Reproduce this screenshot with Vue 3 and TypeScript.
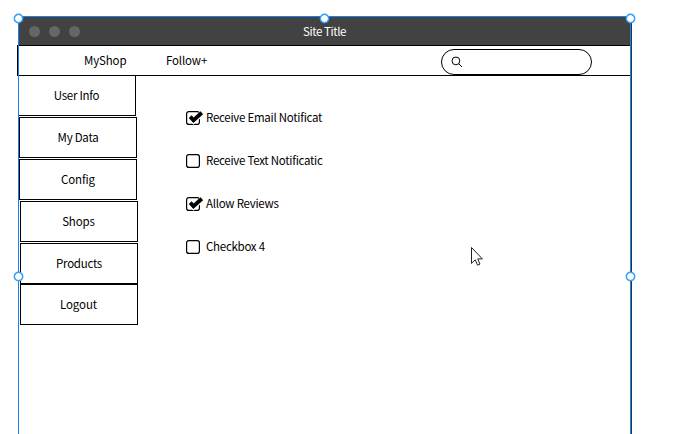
<script setup lang="ts">
interface MenuItem { label: string; kind: string }
interface Option { label: string; checked: boolean; kind: string }

const menu: MenuItem[] = [
  { label: 'User Info', kind: 'user' },
  { label: 'My Data', kind: 'data' },
  { label: 'Config', kind: 'config' },
  { label: 'Shops', kind: 'shops' },
  { label: 'Products', kind: 'products' },
  { label: 'Logout', kind: 'logout' },
]
const options: Option[] = [
  { label: 'Receive Email Notificat', checked: true, kind: 'email' },
  { label: 'Receive Text Notificatic', checked: false, kind: 'sms' },
  { label: 'Allow Reviews', checked: true, kind: 'reviews' },
  { label: 'Checkbox 4', checked: false, kind: 'plain' },
]
const handles: string[] = ['nw', 'n', 'ne', 'w', 'e']
</script>

<template>
  <div class="canvas">
    <div class="window">
      <header class="titlebar">
        <div class="dots"><i v-for="n in 3" :key="n" class="dot"></i></div>
        <span class="title">Site Title</span>
      </header>
      <nav class="toolbar">
        <span class="link shop">MyShop</span>
        <span class="link follow">Follow+</span>
        <div class="search">
          <svg width="12" height="12" viewBox="0 0 12 12" fill="none" stroke="#000">
            <circle cx="4.9" cy="4.9" r="3.9" />
            <path d="M7.7 7.7L11 11" />
          </svg>
        </div>
      </nav>
      <div class="body">
        <aside class="menu">
          <div v-for="item in menu" :key="item.kind" class="item" :class="item.kind">
            <span>{{ item.label }}</span>
          </div>
        </aside>
        <main class="options">
          <div v-for="o in options" :key="o.kind" class="option" :class="o.kind">
            <svg width="18" height="16" viewBox="0 0 18 16" fill="none">
              <rect x="0.6" y="1.6" width="12.8" height="12.8" rx="2.2" stroke="#000" stroke-width="1.2" />
              <template v-if="o.checked">
                <path d="M4.4 7L7.6 10.8L15.6 3.6" stroke="#fff" stroke-width="5.4" />
                <path d="M4.2 6.6L7.5 10.2L15.8 2.8" stroke="#000" stroke-width="3.9" />
              </template>
            </svg>
            <span class="label">{{ o.label }}</span>
          </div>
        </main>
      </div>
    </div>
    <div class="selection">
      <i v-for="h in handles" :key="h" class="handle" :class="h"></i>
    </div>
    <svg class="cursor" width="14" height="21" viewBox="0 0 14 21">
      <path d="M1.5 1.5V17.4L5.2 13.8L7.6 19.2L10 18.1L7.7 12.9H12.4Z" fill="#fff" stroke="#20202a" stroke-width="1" />
    </svg>
  </div>
</template>

<style>
body { background: #fff; }
</style>

<style scoped>
.canvas {
  position: relative;
  box-sizing: border-box;
  width: 674px;
  height: 434px;
  padding: 17px 0 0 17px;
  overflow: hidden;
  background: #fff;
  color: #000;
  font: 11.5px/18px "Noto Sans CJK JP", "Noto Sans", sans-serif;
  letter-spacing: -0.27px;
  white-space: nowrap;
}
.canvas * { box-sizing: border-box; }
.window { width: 615px; height: 417px; border-right: 1px solid #333; }
.titlebar {
  display: grid;
  grid-template-columns: 1fr auto 1fr;
  align-items: center;
  height: 28px;
  margin-left: 1px;
  background: #424242;
  color: #fff;
}
.dots { display: flex; gap: 9px; padding-left: 11px; }
.dot { width: 11px; height: 11px; border-radius: 50%; background: #666; }
.title { letter-spacing: -0.4px; }
.toolbar {
  display: flex;
  height: 31px;
  border: 1px solid #000;
  border-right: 0;
  letter-spacing: -0.15px;
}
.link { padding-top: 5px; }
.shop { width: 82px; margin-left: 66px; }
.follow { width: 275px; }
.search {
  display: flex;
  align-items: center;
  width: 151px;
  height: 26px;
  margin-top: 3px;
  padding-left: 9px;
  border: 1px solid #000;
  border-radius: 13px;
}
.body { display: flex; }
.menu { width: 169px; }
.item {
  display: flex;
  align-items: center;
  justify-content: center;
  width: 118px;
  height: 41px;
  margin: 0 0 1px 2px;
  padding-bottom: 1px;
  border: 1px solid #000;
}
.user { height: 40px; margin-left: 1px; border-top: 0; }
.data { margin-top: 1px; }
.data, .config, .shops { margin-bottom: 1px; }
.shops, .products, .logout { margin-left: 3px; }
.config, .shops, .logout { letter-spacing: -0.12px; }
.user span, .shops span, .logout span { margin-right: 1px; }
.products { margin-bottom: 0; }
.options { display: flex; flex-direction: column; gap: 25px; padding-top: 33px; }
.option { display: flex; align-items: center; gap: 2px; height: 18px; }
.label { height: 20px; }
.selection {
  position: absolute;
  left: 18px;
  top: 16px;
  width: 613px;
  height: 430px;
  border: 1px solid #1a7ff5;
}
.handle {
  position: absolute;
  width: 9px;
  height: 9px;
  border: 1px solid #2196f3;
  border-radius: 50%;
  background: #fff;
  box-shadow: 0 0 0 0.4px #2196f3;
}
.nw { left: -5px; top: -3px; }
.n { left: 301px; top: -3px; }
.ne { left: 607px; top: -3px; }
.w { left: -5px; top: 255px; }
.e { left: 607px; top: 255px; }
.cursor { position: absolute; left: 470px; top: 246px; }
</style>
